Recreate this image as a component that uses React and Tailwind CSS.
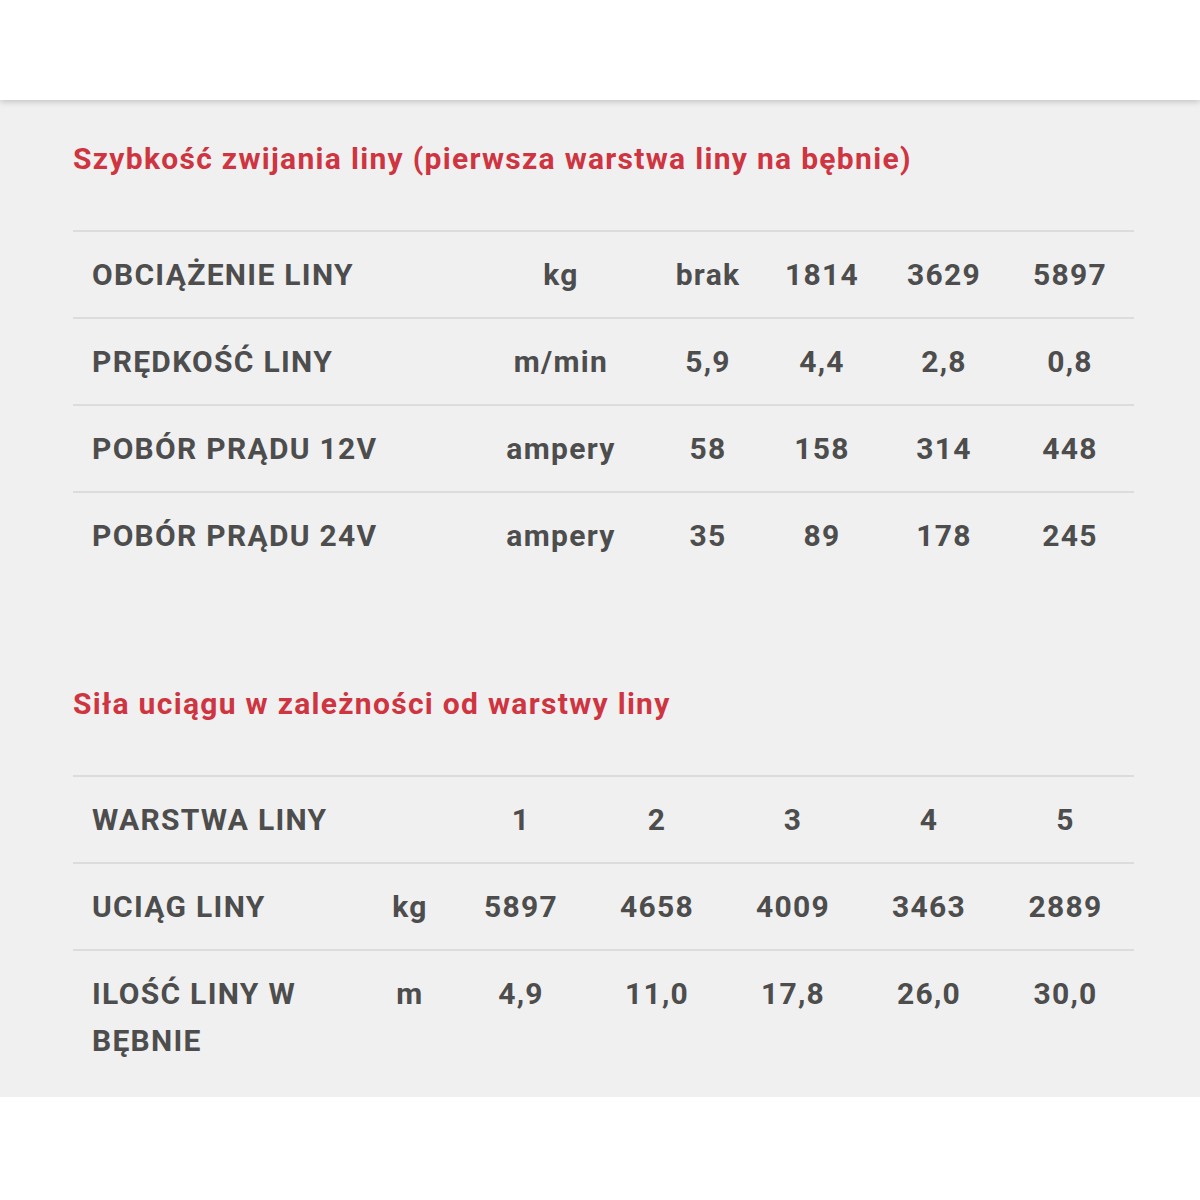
const speedRows = [
  ["OBCIĄŻENIE LINY", "kg", "brak", "1814", "3629", "5897"],
  ["PRĘDKOŚĆ LINY", "m/min", "5,9", "4,4", "2,8", "0,8"],
  ["POBÓR PRĄDU 12V", "ampery", "58", "158", "314", "448"],
  ["POBÓR PRĄDU 24V", "ampery", "35", "89", "178", "245"],
]

const pullRows = [
  ["WARSTWA LINY", "", "1", "2", "3", "4", "5"],
  ["UCIĄG LINY", "kg", "5897", "4658", "4009", "3463", "2889"],
  ["ILOŚĆ LINY W BĘBNIE", "m", "4,9", "11,0", "17,8", "26,0", "30,0"],
]

const Table = ({ rows, cols }) => (
  <div className="border-t-2 border-[#dcdcdc]">
    {rows.map((row, i) => (
      <div
        key={i}
        className={`grid ${cols} ${i < rows.length - 1 ? "border-b-2 border-[#dcdcdc]" : ""}`}
      >
        {row.map((cell, j) => (
          <div
            key={j}
            className={`py-[19px] leading-[47px] ${j === 0 ? "pl-[19px] pr-[10px] text-left" : "text-center"}`}
          >
            {cell}
          </div>
        ))}
      </div>
    ))}
  </div>
)

export default function App() {
  return (
    <div className="min-h-[1200px] bg-white font-['Roboto',sans-serif]">
      <div className="relative z-10 h-[100px] bg-white shadow-[0_2px_6px_rgba(0,0,0,0.18)]"></div>
      <div className="bg-[#f0f0f0] pl-[73px] pr-[66px] pt-[38px] pb-[14px] text-[30px] font-bold tracking-[1.3px] text-[#4d4d4d]">
        <h2 className="text-[#cf3441] leading-[42px] mb-[50px]">
          Szybkość zwijania liny (pierwsza warstwa liny na bębnie)
        </h2>
        <Table rows={speedRows} cols="grid-cols-[395px_186px_108px_120px_124px_1fr]" />

        <h2 className="text-[#cf3441] leading-[42px] mt-[105px] mb-[50px]">
          Siła uciągu w zależności od warstwy liny
        </h2>
        <Table
          rows={pullRows}
          cols="grid-cols-[294px_86px_136px_136px_136px_136px_1fr]"
        />
      </div>
    </div>
  )
}
